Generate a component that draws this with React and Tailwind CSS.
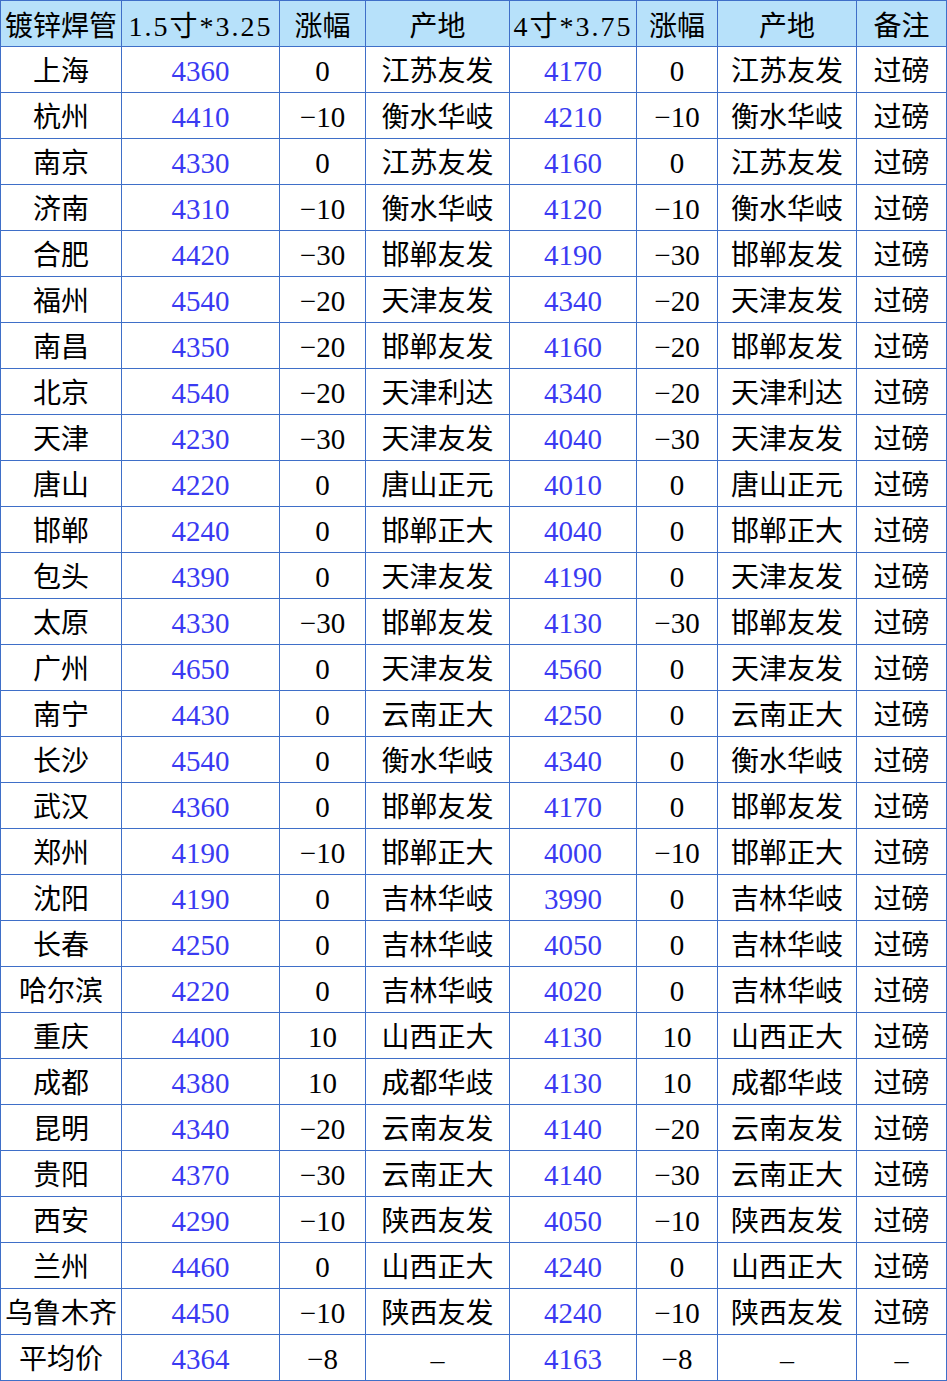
import React from 'react';

const rows = [
  ['上海', '4360', '0', '江苏友发', '4170', '0', '江苏友发'],
  ['杭州', '4410', '−10', '衡水华岐', '4210', '−10', '衡水华岐'],
  ['南京', '4330', '0', '江苏友发', '4160', '0', '江苏友发'],
  ['济南', '4310', '−10', '衡水华岐', '4120', '−10', '衡水华岐'],
  ['合肥', '4420', '−30', '邯郸友发', '4190', '−30', '邯郸友发'],
  ['福州', '4540', '−20', '天津友发', '4340', '−20', '天津友发'],
  ['南昌', '4350', '−20', '邯郸友发', '4160', '−20', '邯郸友发'],
  ['北京', '4540', '−20', '天津利达', '4340', '−20', '天津利达'],
  ['天津', '4230', '−30', '天津友发', '4040', '−30', '天津友发'],
  ['唐山', '4220', '0', '唐山正元', '4010', '0', '唐山正元'],
  ['邯郸', '4240', '0', '邯郸正大', '4040', '0', '邯郸正大'],
  ['包头', '4390', '0', '天津友发', '4190', '0', '天津友发'],
  ['太原', '4330', '−30', '邯郸友发', '4130', '−30', '邯郸友发'],
  ['广州', '4650', '0', '天津友发', '4560', '0', '天津友发'],
  ['南宁', '4430', '0', '云南正大', '4250', '0', '云南正大'],
  ['长沙', '4540', '0', '衡水华岐', '4340', '0', '衡水华岐'],
  ['武汉', '4360', '0', '邯郸友发', '4170', '0', '邯郸友发'],
  ['郑州', '4190', '−10', '邯郸正大', '4000', '−10', '邯郸正大'],
  ['沈阳', '4190', '0', '吉林华岐', '3990', '0', '吉林华岐'],
  ['长春', '4250', '0', '吉林华岐', '4050', '0', '吉林华岐'],
  ['哈尔滨', '4220', '0', '吉林华岐', '4020', '0', '吉林华岐'],
  ['重庆', '4400', '10', '山西正大', '4130', '10', '山西正大'],
  ['成都', '4380', '10', '成都华歧', '4130', '10', '成都华歧'],
  ['昆明', '4340', '−20', '云南友发', '4140', '−20', '云南友发'],
  ['贵阳', '4370', '−30', '云南正大', '4140', '−30', '云南正大'],
  ['西安', '4290', '−10', '陕西友发', '4050', '−10', '陕西友发'],
  ['兰州', '4460', '0', '山西正大', '4240', '0', '山西正大'],
  ['乌鲁木齐', '4450', '−10', '陕西友发', '4240', '−10', '陕西友发'],
];

const widths = ['w-[121px]', 'w-[158px]', 'w-[86px]', 'w-[144px]', 'w-[127px]', 'w-[81px]', 'w-[139px]', 'w-[90px]'];
const headers = ['镀锌焊管', '1.5寸*3.25', '涨幅', '产地', '4寸*3.75', '涨幅', '产地', '备注'];

const base = 'border border-[#3f6fc8] h-[46px] p-0 text-center align-middle whitespace-nowrap';
const cell = `${base} pt-[4px]`;
const price = `${base} pt-[3px] text-[29px] text-[#3a3af2]`;
const change = `${base} pt-[3px] text-[29px]`;

export default function App() {
  return (
    <div className="w-[947px] h-[1381px] bg-white overflow-hidden">
      <table
        className="table-fixed border-collapse w-[947px] text-[28px] leading-none text-black"
        style={{ fontFamily: '"Liberation Serif", "Noto Sans CJK SC", serif' }}
      >
        <colgroup>
          {widths.map((w, i) => <col key={i} className={w} />)}
        </colgroup>
        <thead>
          <tr className="bg-[#b7e1fa]">
            {headers.map((h, i) => (
              <th key={i} className={`${base} pt-[6px] font-normal ${i === 1 || i === 4 ? 'tracking-[2px]' : ''}`}>{h}</th>
            ))}
          </tr>
        </thead>
        <tbody>
          {rows.map((r) => (
            <tr key={r[0]}>
              <td className={cell}>{r[0]}</td>
              <td className={price}>{r[1]}</td>
              <td className={change}>{r[2]}</td>
              <td className={cell}>{r[3]}</td>
              <td className={price}>{r[4]}</td>
              <td className={change}>{r[5]}</td>
              <td className={cell}>{r[6]}</td>
              <td className={cell}>过磅</td>
            </tr>
          ))}
          <tr>
            <td className={cell}>平均价</td>
            <td className={price}>4364</td>
            <td className={change}>−8</td>
            <td className={cell}>–</td>
            <td className={price}>4163</td>
            <td className={change}>−8</td>
            <td className={cell}>–</td>
            <td className={cell}>–</td>
          </tr>
        </tbody>
      </table>
    </div>
  );
}
